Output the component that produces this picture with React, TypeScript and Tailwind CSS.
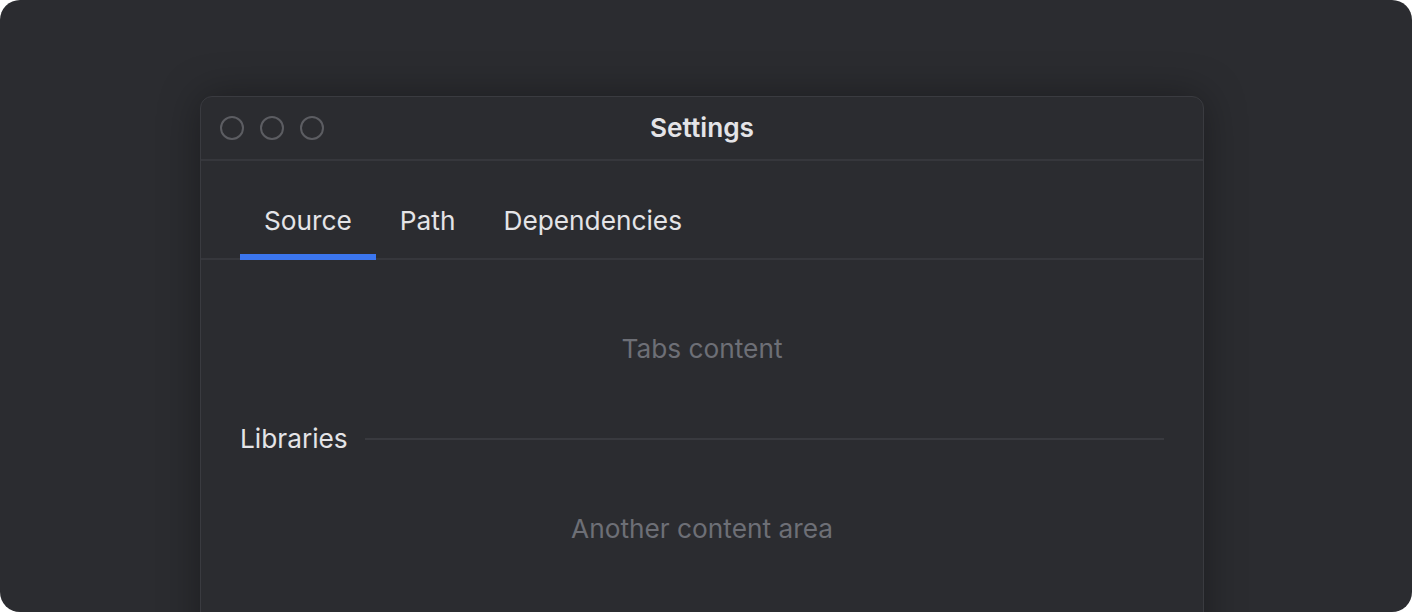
import { useState } from 'react'

const TABS = ['Source', 'Path', 'Dependencies']

export default function App() {
  const [tab, setTab] = useState('Source')

  return (
    <div className="h-[612px] w-[1412px] bg-white font-['Inter',sans-serif]">
      <div className="flex h-full w-full overflow-hidden rounded-[20px] bg-[#2b2c30] pl-[200px] pt-[96px]">
        <div className="flex h-[560px] w-[1004px] flex-col rounded-t-[12px] border border-[#3a3b40] bg-[#2b2c30] shadow-[0_0_40px_rgba(0,0,0,0.35)]">
          <header className="relative flex h-[64px] shrink-0 items-center border-b-2 border-[#36373c] px-[19px]">
            <div className="flex gap-[16px]">
              <span className="h-[24px] w-[24px] rounded-full border-2 border-[#5c5d62]" />
              <span className="h-[24px] w-[24px] rounded-full border-2 border-[#5c5d62]" />
              <span className="h-[24px] w-[24px] rounded-full border-2 border-[#5c5d62]" />
            </div>
            <h1 className="absolute inset-x-0 text-center text-[26.25px] font-semibold leading-[32px] text-[#e4e4e7]">Settings</h1>
          </header>

          <nav className="flex h-[99px] shrink-0 items-end border-b-2 border-[#36373c] px-[39px]">
            {TABS.map((t) => (
              <button
                key={t}
                onClick={() => setTab(t)}
                className={`relative -mb-[2px] border-b-[6px] px-[24px] pb-[17px] text-[26.25px] leading-[32px] text-[#e4e4e7] ${tab === t ? 'border-[#3b76ef]' : 'border-transparent'}`}
              >
                {t}
              </button>
            ))}
          </nav>

          <div className="flex flex-col px-[39px]">
            <p className="pt-[73px] text-center text-[26.25px] leading-[32px] text-[#6d6f76]">Tabs content</p>
            <div className="mt-[58px] flex items-center gap-[17px]">
              <span className="text-[26.25px] leading-[32px] text-[#e4e4e7]">Libraries</span>
              <div className="h-[2px] flex-1 bg-[#393a3f]" />
            </div>
            <p className="pt-[58px] text-center text-[26.25px] leading-[32px] text-[#6d6f76]">Another content area</p>
          </div>
        </div>
      </div>
    </div>
  )
}
